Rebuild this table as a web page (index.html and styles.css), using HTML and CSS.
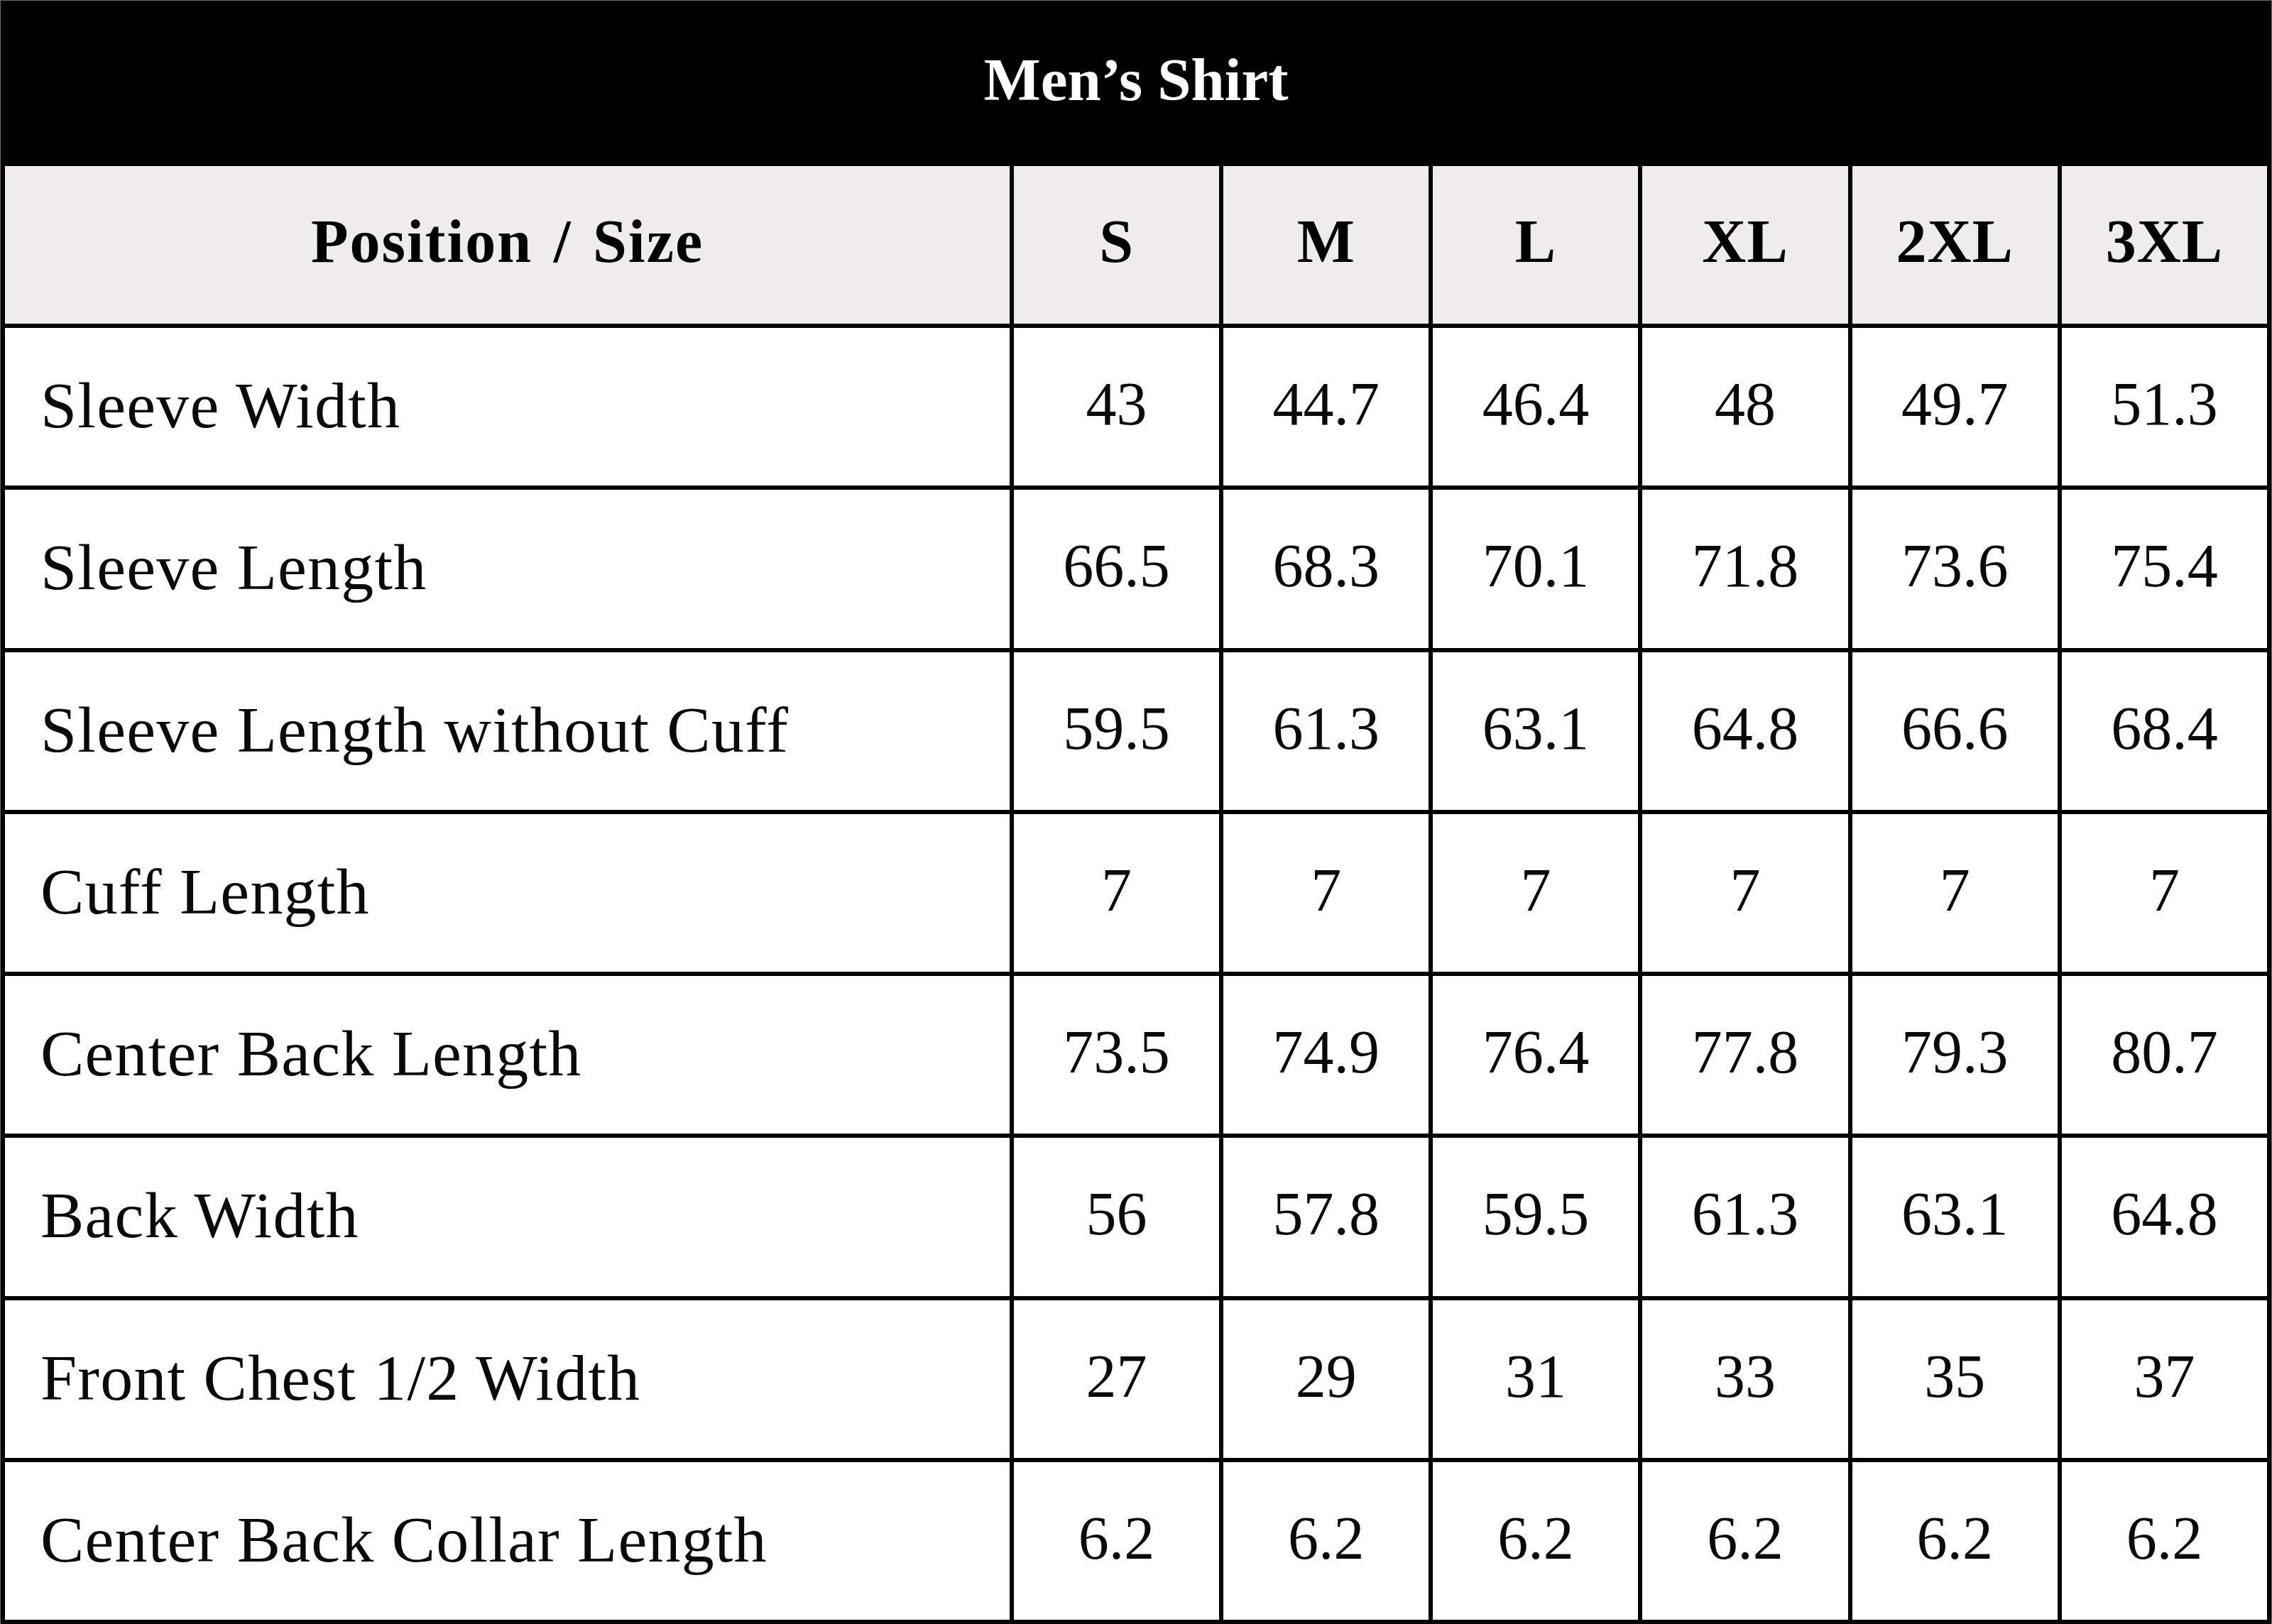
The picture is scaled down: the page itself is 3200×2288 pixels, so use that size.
FILE: index.html
```html
<!DOCTYPE html>
<html lang="en">
<head>
<meta charset="utf-8">
<title>Men's Shirt Size Chart</title>
<link rel="stylesheet" href="styles.css">
</head>
<body>
<div class="chart">
  <div class="title">Men’s Shirt</div>
  <div class="grid">
    <div class="cell head first">Position / Size</div>
    <div class="cell head">S</div>
    <div class="cell head">M</div>
    <div class="cell head">L</div>
    <div class="cell head">XL</div>
    <div class="cell head">2XL</div>
    <div class="cell head">3XL</div>

    <div class="cell label">Sleeve Width</div>
    <div class="cell num">43</div><div class="cell num">44.7</div><div class="cell num">46.4</div><div class="cell num">48</div><div class="cell num">49.7</div><div class="cell num">51.3</div>

    <div class="cell label">Sleeve Length</div>
    <div class="cell num">66.5</div><div class="cell num">68.3</div><div class="cell num">70.1</div><div class="cell num">71.8</div><div class="cell num">73.6</div><div class="cell num">75.4</div>

    <div class="cell label">Sleeve Length without Cuff</div>
    <div class="cell num">59.5</div><div class="cell num">61.3</div><div class="cell num">63.1</div><div class="cell num">64.8</div><div class="cell num">66.6</div><div class="cell num">68.4</div>

    <div class="cell label">Cuff Length</div>
    <div class="cell num">7</div><div class="cell num">7</div><div class="cell num">7</div><div class="cell num">7</div><div class="cell num">7</div><div class="cell num">7</div>

    <div class="cell label">Center Back Length</div>
    <div class="cell num">73.5</div><div class="cell num">74.9</div><div class="cell num">76.4</div><div class="cell num">77.8</div><div class="cell num">79.3</div><div class="cell num">80.7</div>

    <div class="cell label">Back Width</div>
    <div class="cell num">56</div><div class="cell num">57.8</div><div class="cell num">59.5</div><div class="cell num">61.3</div><div class="cell num">63.1</div><div class="cell num">64.8</div>

    <div class="cell label">Front Chest 1/2 Width</div>
    <div class="cell num">27</div><div class="cell num">29</div><div class="cell num">31</div><div class="cell num">33</div><div class="cell num">35</div><div class="cell num">37</div>

    <div class="cell label">Center Back Collar Length</div>
    <div class="cell num">6.2</div><div class="cell num">6.2</div><div class="cell num">6.2</div><div class="cell num">6.2</div><div class="cell num">6.2</div><div class="cell num">6.2</div>
  </div>
</div>
</body>
</html>
```

FILE: styles.css
```css
html, body {
  margin: 0;
  padding: 0;
  background: #ffffff;
}

body {
  font-family: "Liberation Serif", "Times New Roman", serif;
  color: #000;
}

.chart {
  width: 3200px;
  height: 2288px;
  box-sizing: border-box;
  border: 1px solid #6e6e6e;
  border-bottom: 0;
  display: flex;
  flex-direction: column;
  overflow: hidden;
}

.title {
  height: 233px;
  flex: 0 0 233px;
  background: #000;
  color: #fff;
  font-weight: 700;
  font-size: 85px;
  display: flex;
  align-items: center;
  justify-content: center;
  padding-bottom: 12px;
  box-sizing: border-box;
}

.grid {
  flex: 1 1 auto;
  background: #000;
  display: grid;
  grid-template-columns: 1415px repeat(6, 1fr);
  grid-template-rows: 222px repeat(8, 222.25px);
  gap: 6px;
  padding: 0 6px 6px 6px;
}

.cell {
  background: #fff;
  display: flex;
  align-items: center;
  justify-content: center;
  box-sizing: border-box;
  white-space: nowrap;
}

.head {
  background: #f1ecec;
  font-weight: 700;
  font-size: 86px;
  letter-spacing: 1px;
  padding-bottom: 10px;
}

.head.first {
  letter-spacing: 2px;
  word-spacing: 6px;
}

.label {
  justify-content: flex-start;
  padding-left: 50px;
  padding-bottom: 4px;
  font-size: 92px;
  letter-spacing: 1.2px;
  color: #0a0a0a;
}

.num {
  font-size: 86px;
  padding-bottom: 8px;
  color: #0a0a0a;
}
```
